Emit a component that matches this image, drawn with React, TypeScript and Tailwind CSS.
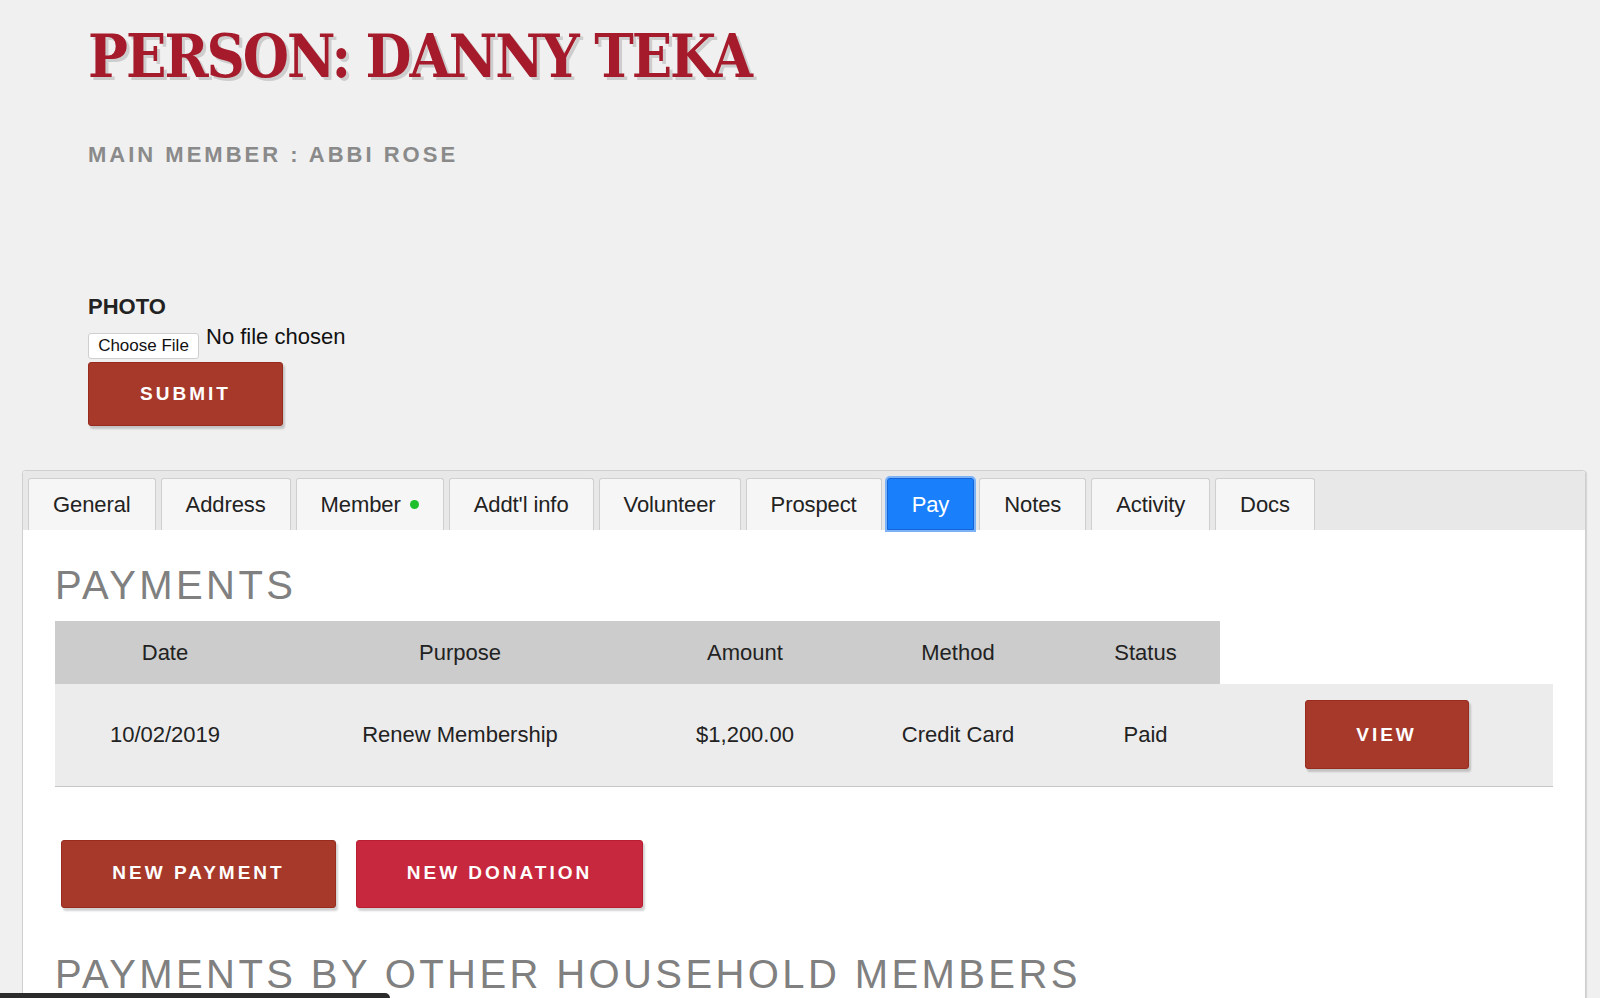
import { useState } from 'react';

const tabs = ['General', 'Address', 'Member', "Addt'l info", 'Volunteer', 'Prospect', 'Pay', 'Notes', 'Activity', 'Docs'];

const payments = [
  { date: '10/02/2019', purpose: 'Renew Membership', amount: '$1,200.00', method: 'Credit Card', status: 'Paid' },
];

const redBtn =
  'bg-[#a7392b] border border-[#962b1e] rounded-[3px] text-white font-bold tracking-[3px] shadow-[2px_3px_2px_rgba(0,0,0,0.18)]';

function Tab({ label, active, onClick }: { label: string; active: boolean; onClick: () => void }) {
  return (
    <button
      onClick={onClick}
      className={`h-[52px] px-6 flex items-center gap-[9px] text-[22px] tracking-[-0.1px] rounded-t-[3px] border ${
        active
          ? 'bg-[#1a7ffb] border-[#1466d6] text-white shadow-[0_0_0_2px_#7cb2f7]'
          : 'bg-[#f6f6f6] border-[#cfcfcf] border-b-0 text-[#222]'
      }`}
    >
      {label}
      {label === 'Member' && <span className="w-[9px] h-[9px] rounded-full bg-[#20c02c]" />}
    </button>
  );
}

export default function App() {
  const [tab, setTab] = useState('Pay');

  return (
    <div className="relative h-[998px] overflow-hidden bg-[#f0f0f0] font-['Liberation_Sans',Arial,sans-serif] text-[#222]">
      {/* Header */}
      <div className="pl-[88px] pt-[27px]">
        <h1 className="font-['DejaVu_Serif_Condensed','DejaVu_Serif',serif] [font-stretch:condensed] font-bold text-[59px] leading-[59px] tracking-[-2px] text-[#a61b2b] [text-shadow:3px_3px_0_#cdcdcd]">
          PERSON: DANNY TEKA
        </h1>
        <p className="mt-[58px] text-[22px] leading-[22px] font-bold tracking-[3px] text-[#8a8a8a]">
          MAIN MEMBER : ABBI ROSE
        </p>

        {/* Photo upload */}
        <div className="mt-[130px]">
          <div className="text-[22px] leading-[22px] font-bold text-[#222]">PHOTO</div>
          <div className="mt-[15px] flex items-start">
            <span className="h-[26px] w-[111px] flex items-center justify-center bg-white border border-[#cfcfcf] rounded-[3px] text-[17px] text-[#111]">
              Choose File
            </span>
            <span className="-mt-[7px] ml-[7px] text-[22px] leading-[22px] text-[#111]">No file chosen</span>
          </div>
          <button className={`mt-[3px] w-[195px] h-[64px] text-[19px] ${redBtn}`}>SUBMIT</button>
        </div>
      </div>

      {/* Tabbed panel */}
      <div className="mt-[44px] ml-[22px] mr-[14px] bg-white border border-[#cfcfcf] rounded-[3px] shadow-[1px_1px_1px_rgba(0,0,0,0.12)]">
        <div className="bg-[#e8e8e8] pt-[7px] pl-[5px] flex gap-[5px] rounded-t-[3px]">
          {tabs.map(t => (
            <Tab key={t} label={t} active={tab === t} onClick={() => setTab(t)} />
          ))}
        </div>

        <div className="px-[32px] pt-[35px] pb-[40px]">
          <h2 className="text-[40px] leading-[40px] tracking-[3.4px] text-[#808080]">PAYMENTS</h2>

          <table className="mt-[16px] w-full table-fixed border-collapse text-[22px] text-[#222]">
            <colgroup>
              <col className="w-[220px]" />
              <col className="w-[370px]" />
              <col className="w-[200px]" />
              <col className="w-[226px]" />
              <col className="w-[149px]" />
              <col />
            </colgroup>
            <thead>
              <tr className="h-[63px]">
                {['Date', 'Purpose', 'Amount', 'Method', 'Status'].map(h => (
                  <th key={h} className="bg-[#cccccc] font-normal text-center">{h}</th>
                ))}
                <th />
              </tr>
            </thead>
            <tbody>
              {payments.map(p => (
                <tr key={p.date} className="h-[102px] bg-[#ececec] border-b border-[#c6c6c6] text-center">
                  <td>{p.date}</td>
                  <td>{p.purpose}</td>
                  <td>{p.amount}</td>
                  <td>{p.method}</td>
                  <td>{p.status}</td>
                  <td>
                    <button className={`w-[164px] h-[69px] text-[19px] ${redBtn}`}>VIEW</button>
                  </td>
                </tr>
              ))}
            </tbody>
          </table>

          <div className="mt-[53px] ml-[6px] flex gap-[20px]">
            <button className={`w-[275px] h-[68px] text-[19px] ${redBtn}`}>NEW PAYMENT</button>
            <button className="w-[287px] h-[68px] text-[19px] bg-[#c8283d] border border-[#b81d31] rounded-[3px] text-white font-bold tracking-[3px] shadow-[2px_3px_2px_rgba(0,0,0,0.18)]">
              NEW DONATION
            </button>
          </div>

          <h2 className="mt-[46px] text-[40px] leading-[40px] tracking-[3.4px] text-[#808080]">
            PAYMENTS BY OTHER HOUSEHOLD MEMBERS
          </h2>
        </div>
      </div>

      {/* overlay scrollbar thumb */}
      <div className="absolute bottom-0 left-0 w-[390px] h-[5px] bg-[#2b2b2b] rounded-tr-[6px]" />
    </div>
  );
}
